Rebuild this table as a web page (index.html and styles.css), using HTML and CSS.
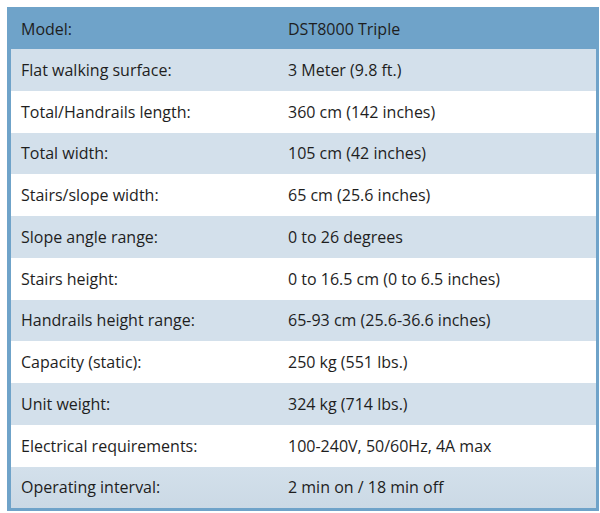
FILE: index.html
```html
<!DOCTYPE html>
<html>
<head>
<meta charset="utf-8">
<link rel="stylesheet" href="styles.css">
</head>
<body>
<div class="frame">
  <table class="specs">
    <tr class="head"><td>Model:</td><td>DST8000 Triple</td></tr>
    <tr class="alt"><td>Flat walking surface:</td><td>3 Meter (9.8 ft.)</td></tr>
    <tr><td>Total/Handrails length:</td><td>360 cm (142 inches)</td></tr>
    <tr class="alt"><td>Total width:</td><td>105 cm (42 inches)</td></tr>
    <tr><td>Stairs/slope width:</td><td>65 cm (25.6 inches)</td></tr>
    <tr class="alt"><td>Slope angle range:</td><td>0 to 26 degrees</td></tr>
    <tr><td>Stairs height:</td><td>0 to 16.5 cm (0 to 6.5 inches)</td></tr>
    <tr class="alt"><td>Handrails height range:</td><td>65-93 cm (25.6-36.6 inches)</td></tr>
    <tr><td>Capacity (static):</td><td>250 kg (551 lbs.)</td></tr>
    <tr class="alt"><td>Unit weight:</td><td>324 kg (714 lbs.)</td></tr>
    <tr><td>Electrical requirements:</td><td>100-240V, 50/60Hz, 4A max</td></tr>
    <tr class="alt last"><td>Operating interval:</td><td>2 min on / 18 min off</td></tr>
  </table>
</div>
</body>
</html>
```
FILE: styles.css
```css
html, body {
  margin: 0;
  padding: 0;
  background: #ffffff;
}
body {
  padding: 7px 1px 1px 7px;
  font-family: "Open Sans", "Liberation Sans", sans-serif;
  font-size: 16px;
  color: #1e1e1e;
}
.frame {
  width: 585px;
  background: #6fa3c9;
  padding: 0 3px 3px 4px;
}
.specs {
  width: 100%;
  border-collapse: collapse;
  table-layout: fixed;
}
.specs td {
  height: 41.75px;
  padding: 0 0 0 10px;
  vertical-align: middle;
  background: #ffffff;
  white-space: nowrap;
}
.specs td:first-child {
  width: 257px;
}
.specs tr.head td {
  background: transparent;
  height: 40px;
  padding-top: 2px;
}
.specs tr.alt td {
  background: #d3e0eb;
}
.specs tr.last td {
  background: linear-gradient(#d3e0eb, #cbd9e5);
}
```
